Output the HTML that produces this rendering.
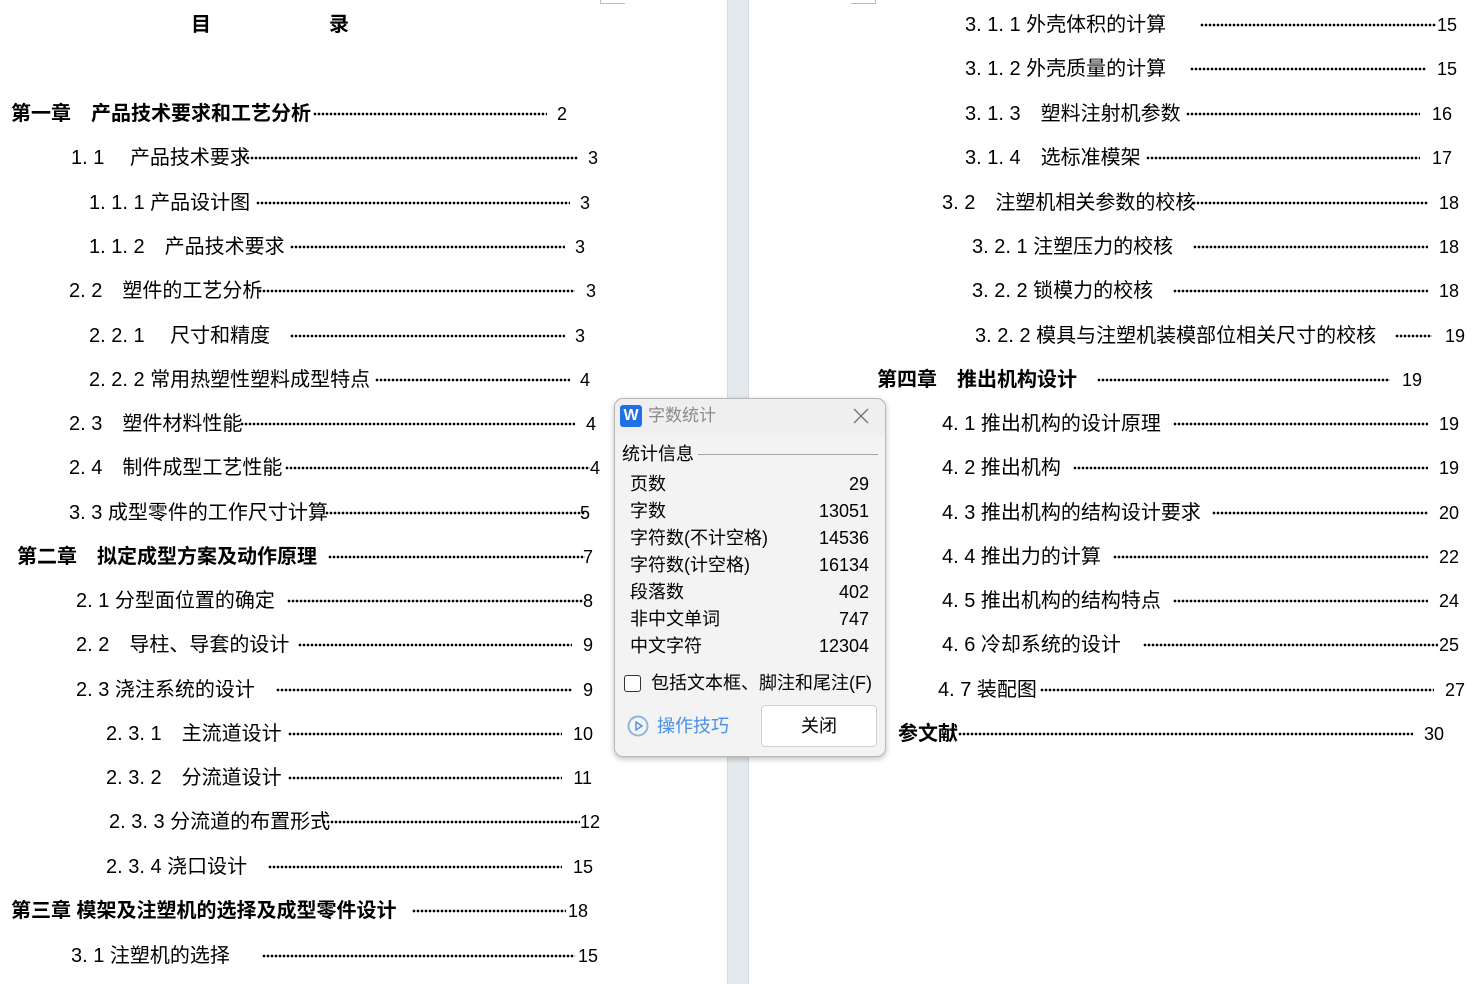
<!DOCTYPE html>
<html><head><meta charset="utf-8"><style>
body{margin:0;width:1475px;height:984px;background:#fff;position:relative;overflow:hidden;font-family:"Liberation Sans","Noto Sans CJK SC",sans-serif;color:#000}
.gap{position:absolute;left:727px;top:0;width:22px;height:984px;background:#e3e9ec;border-left:1px solid #d4dadd;border-right:1px solid #d4dadd;box-sizing:border-box}
.t{position:absolute;font-size:20px;line-height:24px;white-space:pre}
.b{font-weight:bold}
.d{position:absolute;height:4px;background:radial-gradient(circle,#000 1.1px,transparent 1.6px) 0 0/4px 4px repeat-x;margin-top:-1px}
.n{position:absolute;font-size:18px;line-height:24px;text-align:right;width:40px}
.dlg{position:absolute;left:614px;top:398px;width:272px;height:359px;background:#f3f3f3;border:1px solid #b8b8b8;border-radius:9px;box-shadow:0 2px 6px rgba(0,0,0,.25);box-sizing:border-box}
.dt{position:absolute;font-size:18px;line-height:24px;white-space:pre}
</style></head><body>
<div class="gap"></div>
<div style="position:absolute;left:600px;top:0;width:24px;height:3px;border-left:1px solid #bbb;border-bottom:1px solid #bbb"></div>
<div style="position:absolute;left:851px;top:0;width:24px;height:3px;border-right:1px solid #bbb;border-bottom:1px solid #bbb"></div>

<div class="t b" style="left:191px;top:13px">目</div>
<div class="t b" style="left:329px;top:13px">录</div>

<div class="t b" style="left:11px;top:102px">第一章　产品技术要求和工艺分析</div><div class="d" style="left:313px;width:234px;top:113px"></div><div class="n" style="left:527px;top:102px">2</div>
<div class="t" style="left:71px;top:146px">1. 1　 产品技术要求</div><div class="d" style="left:242px;width:336px;top:157px"></div><div class="n" style="left:558px;top:146px">3</div>
<div class="t" style="left:89px;top:191px">1. 1. 1 产品设计图</div><div class="d" style="left:256px;width:314px;top:202px"></div><div class="n" style="left:550px;top:191px">3</div>
<div class="t" style="left:89px;top:235px">1. 1. 2　产品技术要求</div><div class="d" style="left:290px;width:275px;top:246px"></div><div class="n" style="left:545px;top:235px">3</div>
<div class="t" style="left:69px;top:279px">2. 2　塑件的工艺分析</div><div class="d" style="left:258px;width:317px;top:290px"></div><div class="n" style="left:556px;top:279px">3</div>
<div class="t" style="left:89px;top:324px">2. 2. 1　 尺寸和精度</div><div class="d" style="left:290px;width:275px;top:335px"></div><div class="n" style="left:545px;top:324px">3</div>
<div class="t" style="left:89px;top:368px">2. 2. 2 常用热塑性塑料成型特点</div><div class="d" style="left:375px;width:195px;top:379px"></div><div class="n" style="left:550px;top:368px">4</div>
<div class="t" style="left:69px;top:412px">2. 3　塑件材料性能</div><div class="d" style="left:240px;width:335px;top:423px"></div><div class="n" style="left:556px;top:412px">4</div>
<div class="t" style="left:69px;top:456px">2. 4　制件成型工艺性能</div><div class="d" style="left:285px;width:305px;top:467px"></div><div class="n" style="left:560px;top:456px">4</div>
<div class="t" style="left:69px;top:501px">3. 3 成型零件的工作尺寸计算</div><div class="d" style="left:325px;width:260px;top:512px"></div><div class="n" style="left:550px;top:501px">5</div>
<div class="t b" style="left:17px;top:545px">第二章　拟定成型方案及动作原理</div><div class="d" style="left:328px;width:257px;top:556px"></div><div class="n" style="left:553px;top:545px">7</div>
<div class="t" style="left:76px;top:589px">2. 1 分型面位置的确定</div><div class="d" style="left:287px;width:296px;top:600px"></div><div class="n" style="left:553px;top:589px">8</div>
<div class="t" style="left:76px;top:633px">2. 2　导柱、导套的设计</div><div class="d" style="left:298px;width:274px;top:644px"></div><div class="n" style="left:553px;top:633px">9</div>
<div class="t" style="left:76px;top:678px">2. 3 浇注系统的设计</div><div class="d" style="left:276px;width:296px;top:689px"></div><div class="n" style="left:553px;top:678px">9</div>
<div class="t" style="left:106px;top:722px">2. 3. 1　主流道设计</div><div class="d" style="left:288px;width:274px;top:733px"></div><div class="n" style="left:553px;top:722px">10</div>
<div class="t" style="left:106px;top:766px">2. 3. 2　分流道设计</div><div class="d" style="left:288px;width:274px;top:777px"></div><div class="n" style="left:552px;top:766px">11</div>
<div class="t" style="left:109px;top:810px">2. 3. 3 分流道的布置形式</div><div class="d" style="left:322px;width:258px;top:821px"></div><div class="n" style="left:560px;top:810px">12</div>
<div class="t" style="left:106px;top:855px">2. 3. 4 浇口设计</div><div class="d" style="left:268px;width:294px;top:866px"></div><div class="n" style="left:553px;top:855px">15</div>
<div class="t b" style="left:11px;top:899px">第三章 模架及注塑机的选择及成型零件设计</div><div class="d" style="left:412px;width:154px;top:910px"></div><div class="n" style="left:548px;top:899px">18</div>
<div class="t" style="left:71px;top:944px">3. 1 注塑机的选择</div><div class="d" style="left:262px;width:313px;top:955px"></div><div class="n" style="left:558px;top:944px">15</div>

<div class="t" style="left:965px;top:13px">3. 1. 1 外壳体积的计算</div><div class="d" style="left:1200px;width:236px;top:24px"></div><div class="n" style="left:1417px;top:13px">15</div>
<div class="t" style="left:965px;top:57px">3. 1. 2 外壳质量的计算</div><div class="d" style="left:1190px;width:236px;top:68px"></div><div class="n" style="left:1417px;top:57px">15</div>
<div class="t" style="left:965px;top:102px">3. 1. 3　塑料注射机参数</div><div class="d" style="left:1186px;width:234px;top:113px"></div><div class="n" style="left:1412px;top:102px">16</div>
<div class="t" style="left:965px;top:146px">3. 1. 4　选标准模架</div><div class="d" style="left:1146px;width:274px;top:157px"></div><div class="n" style="left:1412px;top:146px">17</div>
<div class="t" style="left:942px;top:191px">3. 2　注塑机相关参数的校核</div><div class="d" style="left:1192px;width:236px;top:202px"></div><div class="n" style="left:1419px;top:191px">18</div>
<div class="t" style="left:972px;top:235px">3. 2. 1 注塑压力的校核</div><div class="d" style="left:1193px;width:235px;top:246px"></div><div class="n" style="left:1419px;top:235px">18</div>
<div class="t" style="left:972px;top:279px">3. 2. 2 锁模力的校核</div><div class="d" style="left:1173px;width:255px;top:290px"></div><div class="n" style="left:1419px;top:279px">18</div>
<div class="t" style="left:975px;top:324px">3. 2. 2 模具与注塑机装模部位相关尺寸的校核</div><div class="d" style="left:1395px;width:37px;top:335px"></div><div class="n" style="left:1425px;top:324px">19</div>
<div class="t b" style="left:877px;top:368px">第四章　推出机构设计</div><div class="d" style="left:1097px;width:293px;top:379px"></div><div class="n" style="left:1382px;top:368px">19</div>
<div class="t" style="left:942px;top:412px">4. 1 推出机构的设计原理</div><div class="d" style="left:1173px;width:255px;top:423px"></div><div class="n" style="left:1419px;top:412px">19</div>
<div class="t" style="left:942px;top:456px">4. 2 推出机构</div><div class="d" style="left:1073px;width:355px;top:467px"></div><div class="n" style="left:1419px;top:456px">19</div>
<div class="t" style="left:942px;top:501px">4. 3 推出机构的结构设计要求</div><div class="d" style="left:1212px;width:216px;top:512px"></div><div class="n" style="left:1419px;top:501px">20</div>
<div class="t" style="left:942px;top:545px">4. 4 推出力的计算</div><div class="d" style="left:1113px;width:315px;top:556px"></div><div class="n" style="left:1419px;top:545px">22</div>
<div class="t" style="left:942px;top:589px">4. 5 推出机构的结构特点</div><div class="d" style="left:1173px;width:255px;top:600px"></div><div class="n" style="left:1419px;top:589px">24</div>
<div class="t" style="left:942px;top:633px">4. 6 冷却系统的设计</div><div class="d" style="left:1143px;width:295px;top:644px"></div><div class="n" style="left:1419px;top:633px">25</div>
<div class="t" style="left:938px;top:678px">4. 7 装配图</div><div class="d" style="left:1040px;width:394px;top:689px"></div><div class="n" style="left:1425px;top:678px">27</div>
<div class="t b" style="left:898px;top:722px">参文献</div><div class="d" style="left:958px;width:455px;top:733px"></div><div class="n" style="left:1404px;top:722px">30</div>

<div class="dlg">
<div style="position:absolute;left:0;top:0;width:270px;height:37px;background:#efefef;border-radius:9px 9px 0 0"></div>
<div style="position:absolute;left:5px;top:6px;width:22px;height:22px;background:#1f6fe5;border-radius:3px;color:#fff;font-weight:bold;font-size:16px;line-height:22px;text-align:center">W</div>
<div class="dt" style="left:33px;top:5px;color:#8a8a8a;font-size:17px">字数统计</div>
<svg style="position:absolute;left:238px;top:9px" width="16" height="16"><path d="M1 1L15 15M15 1L1 15" stroke="#777" stroke-width="1.4"/></svg>
<div class="dt" style="left:7px;top:43px">统计信息</div>
<div style="position:absolute;left:83px;top:55px;width:180px;height:1px;background:#a8a8a8"></div>
<div class="dt" style="left:15px;top:73px">页数</div><div class="dt" style="right:16px;top:73px">29</div>
<div class="dt" style="left:15px;top:100px">字数</div><div class="dt" style="right:16px;top:100px">13051</div>
<div class="dt" style="left:15px;top:127px">字符数(不计空格)</div><div class="dt" style="right:16px;top:127px">14536</div>
<div class="dt" style="left:15px;top:154px">字符数(计空格)</div><div class="dt" style="right:16px;top:154px">16134</div>
<div class="dt" style="left:15px;top:181px">段落数</div><div class="dt" style="right:16px;top:181px">402</div>
<div class="dt" style="left:15px;top:208px">非中文单词</div><div class="dt" style="right:16px;top:208px">747</div>
<div class="dt" style="left:15px;top:235px">中文字符</div><div class="dt" style="right:16px;top:235px">12304</div>
<div style="position:absolute;left:9px;top:276px;width:17px;height:17px;border:1.3px solid #333;border-radius:3px;background:#fff;box-sizing:border-box"></div>
<div class="dt" style="left:36px;top:272px">包括文本框、脚注和尾注(F)</div>
<svg style="position:absolute;left:12px;top:316px" width="22" height="22"><circle cx="11" cy="11" r="9.5" fill="#f3f3f3" stroke="#8fb5e0" stroke-width="2"/><path d="M9 7L15 11L9 15Z" fill="none" stroke="#4a90e2" stroke-width="1.4"/></svg>
<div class="dt" style="left:42px;top:315px;color:#4a90e2">操作技巧</div>
<div style="position:absolute;left:146px;top:306px;width:116px;height:42px;background:#fff;border:1px solid #cfcfcf;border-radius:4px;box-sizing:border-box;font-size:18px;line-height:40px;text-align:center">关闭</div>
</div>
</body></html>
